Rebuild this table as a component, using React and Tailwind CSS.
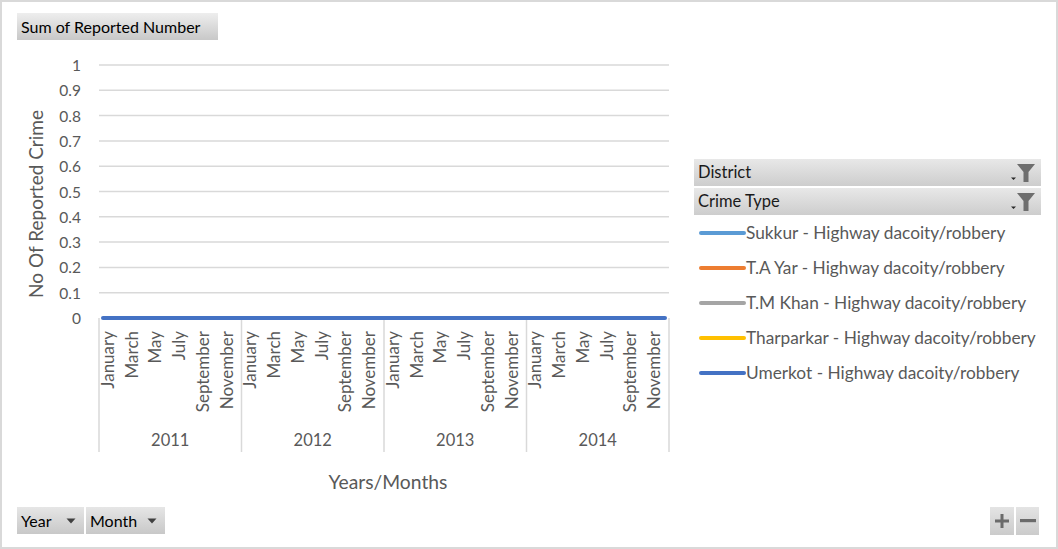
import React from 'react'

const font = { fontFamily: 'Lato, "Open Sans", sans-serif' }

const yTicks = [1, 0.9, 0.8, 0.7, 0.6, 0.5, 0.4, 0.3, 0.2, 0.1, 0]
const years = ['2011', '2012', '2013', '2014']
const months = ['January', 'March', 'May', 'July', 'September', 'November']

const legend = [
  { name: 'Sukkur - Highway dacoity/robbery', color: 'bg-[#5b9bd5]' },
  { name: 'T.A Yar - Highway dacoity/robbery', color: 'bg-[#ed7d31]' },
  { name: 'T.M Khan - Highway dacoity/robbery', color: 'bg-[#a5a5a5]' },
  { name: 'Tharparkar - Highway dacoity/robbery', color: 'bg-[#ffc000]' },
  { name: 'Umerkot - Highway dacoity/robbery', color: 'bg-[#4472c4]' },
]

// plot area in page coordinates
const X0 = 99
const X1 = 669
const Y0 = 318
const STEP = 25.3
const YEAR_W = (X1 - X0) / 4

function Chart() {
  return (
    <svg width="688" height="462" className="block shrink-0">
      <g transform="translate(-2,-40)" fill="#595959" style={font}>
        {yTicks.map((t, i) => {
          const y = 65 + i * STEP
          return (
            <g key={t}>
              {i < 10 && <line x1={X0} x2={X1} y1={y} y2={y} stroke="#d9d9d9" strokeWidth="1.5" />}
              <text x="81" y={y} textAnchor="end" dominantBaseline="central" fontSize="15.5">{t}</text>
            </g>
          )
        })}

        {[0, 1, 2, 3, 4].map(k => (
          <line key={k} x1={X0 + k * YEAR_W} x2={X0 + k * YEAR_W} y1={Y0} y2="452" stroke="#d9d9d9" strokeWidth="1.5" />
        ))}

        <line x1="103" x2="665" y1={Y0} y2={Y0} stroke="#4472c4" strokeWidth="4" strokeLinecap="round" />

        {years.map((yr, k) => (
          <g key={yr}>
            {months.map((m, j) => {
              const x = X0 + k * YEAR_W + (j * 2 + 0.5) * (YEAR_W / 12) + 2.5
              return (
                <text key={m} x={x} y="331" transform={`rotate(-90 ${x} 331)`} textAnchor="end" dominantBaseline="central" fontSize="17">{m}</text>
              )
            })}
            <text x={X0 + (k + 0.5) * YEAR_W} y="440" textAnchor="middle" dominantBaseline="central" fontSize="16.5">{yr}</text>
          </g>
        ))}

        <text x="388" y="481" textAnchor="middle" dominantBaseline="central" fontSize="19.3">Years/Months</text>
        <text x="35" y="204" transform="rotate(-90 35 204)" textAnchor="middle" dominantBaseline="central" fontSize="19">No Of Reported Crime</text>
      </g>
    </svg>
  )
}

function FilterIcon() {
  return (
    <svg width="26" height="20" viewBox="0 0 26 20" className="shrink-0">
      <path d="M2 14.5h5l-2.5 2.5z" fill="#262626" />
      <path d="M8 1h18l-6.5 8v10h-5v-10z" fill="#6e6e6e" />
    </svg>
  )
}

function Caret() {
  return (
    <svg width="10" height="6" viewBox="0 0 10 6">
      <path d="M0.5 0.5h9l-4.5 5z" fill="#404040" />
    </svg>
  )
}

function FieldHeader({ label }) {
  return (
    <div className="h-[27px] w-[347px] flex items-center justify-between pl-[4px] pr-[6px] bg-linear-to-b from-[#e8e8e8] to-[#cdcdcd] text-[16.5px] text-[#1a1a1a]">
      <span>{label}</span>
      <FilterIcon />
    </div>
  )
}

export default function App() {
  return (
    <div className="w-[1058px] h-[549px] box-border border-2 border-[#d9d9d9] bg-white flex flex-col overflow-hidden" style={font}>
      <div className="pl-[15px] pt-[11px]">
        <div className="h-[27px] w-[201px] flex items-center pl-[4px] bg-linear-to-b from-[#eeeeee] to-[#c8c8c8] text-[16px] text-black">
          Sum of Reported Number
        </div>
      </div>

      <div className="flex">
        <Chart />
        <div className="ml-[4px] pt-[119px] flex flex-col">
          <div className="flex flex-col gap-[2px]">
            <FieldHeader label="District" />
            <FieldHeader label="Crime Type" />
          </div>
          <ul className="flex flex-col">
            {legend.map(item => (
              <li key={item.name} className="h-[35px] flex items-center pl-[5px] text-[17.3px] text-[#595959] whitespace-nowrap">
                <span className={`h-[4px] w-[47px] shrink-0 rounded-full ${item.color}`} />
                <span>{item.name}</span>
              </li>
            ))}
          </ul>
        </div>
      </div>

      <div className="flex justify-between items-start pl-[15px] pr-[17px] pt-[5px]">
        <div className="flex gap-[2px]">
          <div className="h-[27px] w-[67px] flex items-center justify-between pl-[4px] pr-[8px] bg-linear-to-b from-[#e6e6e6] to-[#c8c8c8] text-[16px] text-black">
            <span>Year</span>
            <Caret />
          </div>
          <div className="h-[27px] w-[79px] flex items-center justify-between pl-[4px] pr-[8px] bg-linear-to-b from-[#e6e6e6] to-[#c8c8c8] text-[16px] text-black">
            <span>Month</span>
            <Caret />
          </div>
        </div>
        <div className="flex gap-[2px]">
          <button className="h-[28px] w-[24px] flex items-center justify-center bg-linear-to-b from-[#e4e4e4] to-[#cbcbcb]">
            <svg width="14" height="14" viewBox="0 0 14 14">
              <path d="M5.5 0h3v5.5h5.5v3h-5.5v5.5h-3v-5.5h-5.5v-3h5.5z" fill="#6b6b6b" />
            </svg>
          </button>
          <button className="h-[28px] w-[23px] flex items-center justify-center bg-linear-to-b from-[#e4e4e4] to-[#cbcbcb]">
            <svg width="16" height="4" viewBox="0 0 16 4">
              <rect width="16" height="3.2" fill="#6b6b6b" />
            </svg>
          </button>
        </div>
      </div>
    </div>
  )
}
